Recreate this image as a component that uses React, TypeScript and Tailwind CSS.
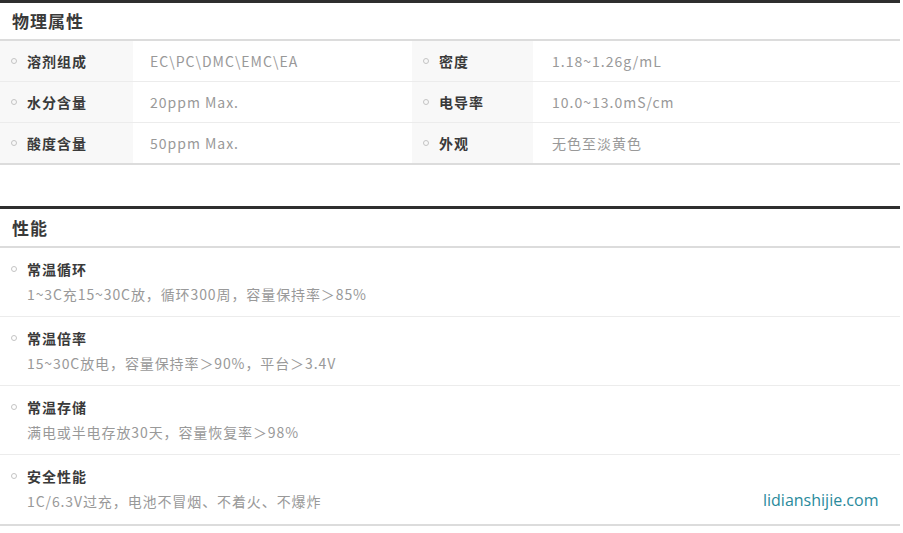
import React from "react";

const cjk = { fontFamily: '"Noto Sans CJK SC", "Noto Sans", sans-serif' };

function Dot() {
  return <span className="inline-block w-[6px] h-[6px] rounded-full border border-[#c4c4c4] shrink-0" />;
}

const props: [string, string, string, string][] = [
  ["溶剂组成", "EC\\PC\\DMC\\EMC\\EA", "密度", "1.18~1.26g/mL"],
  ["水分含量", "20ppm Max.", "电导率", "10.0~13.0mS/cm"],
  ["酸度含量", "50ppm Max.", "外观", "无色至淡黄色"],
];

const perf: [string, string][] = [
  ["常温循环", "1~3C充15~30C放，循环300周，容量保持率＞85%"],
  ["常温倍率", "15~30C放电，容量保持率＞90%，平台＞3.4V"],
  ["常温存储", "满电或半电存放30天，容量恢复率＞98%"],
  ["安全性能", "1C/6.3V过充，电池不冒烟、不着火、不爆炸"],
];

export default function App() {
  return (
    <div className="w-[903px] h-[533px] bg-white relative overflow-hidden" style={cjk}>
      <div className="w-[900px]">
        <div className="border-t-[3px] border-[#2e2e2e]">
          <div className="h-[38px] flex items-center pl-[12px] text-[17px] font-bold text-[#3a3a3a] tracking-[1px] border-b-2 border-[#dcdcdc]">
            物理属性
          </div>
          <div className="border-b-2 border-[#dcdcdc]">
            {props.map((r, i) => (
              <div key={i} className={`flex ${i < 2 ? "h-[41px] border-b border-[#ececec]" : "h-[40px]"}`}>
                <div className="w-[133px] bg-[#f8f8f8] flex items-center pl-[11px] gap-[10px]">
                  <Dot />
                  <span className="text-[14px] font-bold text-[#3a3a3a] tracking-[1px]">{r[0]}</span>
                </div>
                <div className="w-[279px] flex items-center pl-[17px] text-[14px] text-[#999] tracking-[1px]">{r[1]}</div>
                <div className="w-[121px] bg-[#f8f8f8] flex items-center pl-[11px] gap-[10px]">
                  <Dot />
                  <span className="text-[14px] font-bold text-[#3a3a3a] tracking-[1px]">{r[2]}</span>
                </div>
                <div className="flex-1 flex items-center pl-[19px] text-[14px] text-[#999] tracking-[1px]">{r[3]}</div>
              </div>
            ))}
          </div>
        </div>

        <div className="h-[41px]" />

        <div className="border-t-[3px] border-[#2e2e2e]">
          <div className="h-[39px] flex items-center pl-[12px] text-[17px] font-bold text-[#3a3a3a] tracking-[1px] border-b-2 border-[#dcdcdc]">
            性能
          </div>
          <div className="border-b-2 border-[#dcdcdc]">
            {perf.map((r, i) => (
              <div key={i} className={`h-[69px] pl-[11px] pt-[11px] ${i < 3 ? "border-b border-[#ececec]" : ""}`}>
                <div className="flex items-center gap-[10px] h-[20px]">
                  <Dot />
                  <span className="text-[14px] font-bold text-[#3a3a3a] tracking-[1px]">{r[0]}</span>
                </div>
                <div className="pl-[16px] mt-[4px] text-[14px] text-[#999] tracking-[0.9px] leading-[22px]">{r[1]}</div>
              </div>
            ))}
          </div>
        </div>
      </div>
      <div
        className="absolute left-[763px] top-[488px] text-[16px] text-[#2a8a9c]"
        style={{ fontFamily: '"Open Sans", sans-serif' }}
      >
        lidianshijie.com
      </div>
    </div>
  );
}
